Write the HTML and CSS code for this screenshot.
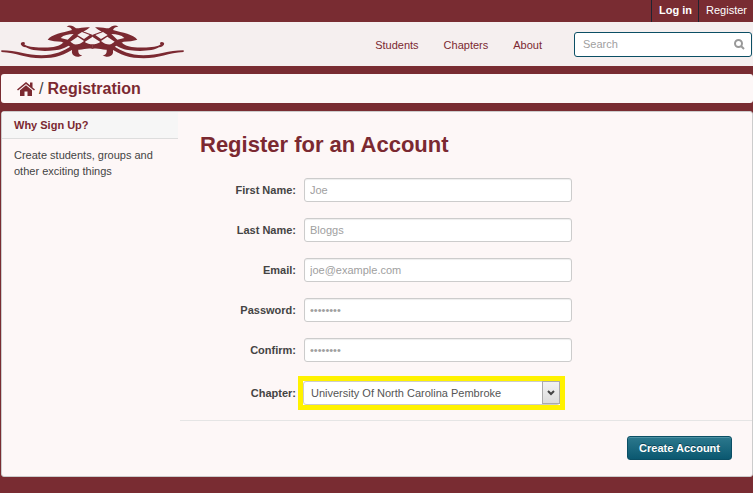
FILE: index.html
```html
<!DOCTYPE html>
<html lang="en">
<head>
<meta charset="utf-8">
<title>Registration</title>
<link rel="stylesheet" href="styles.css">
</head>
<body>
<nav class="topbar" aria-label="Account">
  <a class="login" href="#">Log in</a>
  <a href="#">Register</a>
</nav>
<header class="header">
  <a class="logo" href="#" aria-label="Home">
    <svg viewBox="0 66 555 132" width="185" height="44" aria-hidden="true">
      <defs>
        <g id="wing">
          <path d="M4 151C50 151 80 166 125 166C165 165 192 153 214 138L228 142C195 166 165 175 124 175C78 175 50 158 4 156Z"/>
          <path d="M78 142C60 140 58 126 70 126C77 127 75 131 73 133C82 144 130 144 160 141C178 138 186 132 195 124L214 132C194 145 182 149 164 151C130 155 92 152 78 142Z"/>
          <path fill-rule="evenodd" d="M143 119C155 103 187 98 216 90C213 82 208 80 200 80C208 73 220 77 228 85C240 85 255 80 270 82C264 87 256 92 250 95C260 97 269 101 278 105V147C262 143 250 150 235 149C234 158 237 165 247 166C235 174 220 171 216 159C215 153 218 148 214 144C206 134 194 130 184 125C170 124 154 123 143 119ZM182 114C191 105 205 102 221 102L203 119ZM211 125L233 110L252 123C243 132 232 134 222 133ZM232 105L246 96L269 105L252 117ZM254 126L278 110V133C269 133 261 130 254 126Z"/>
        </g>
      </defs>
      <use href="#wing"/>
      <use href="#wing" transform="matrix(-1 0 0 1 555 0)"/>
    </svg>
  </a>
  <nav class="mainnav" aria-label="Main">
    <a href="#">Students</a>
    <a href="#">Chapters</a>
    <a href="#">About</a>
  </nav>
  <form class="search" role="search">
    <input type="text" placeholder="Search" aria-label="Search">
    <button type="submit" aria-label="Search">
      <svg viewBox="0 0 11 11" width="11" height="11" aria-hidden="true"><circle cx="4.5" cy="4.5" r="3.5"/><path d="M7 7l3 3"/></svg>
    </button>
  </form>
</header>
<div class="breadcrumb">
  <a href="#" aria-label="Home"><svg class="house" viewBox="0 0 18 14" width="18" height="14" aria-hidden="true"><path d="M9 0L0 7.5L1 8.6L9 2L17 8.6L18 7.5L15.5 5.4V.5H13V3.3Z"/><path d="M9 3.2L3 8.2V14H7.5V9.5H10.5V14H15V8.2Z"/></svg></a>
  <span>/</span>
  <h2>Registration</h2>
</div>
<main class="panel">
  <aside class="sidebar">
    <h3>Why Sign Up?</h3>
    <p>Create students, groups and other exciting things</p>
  </aside>
  <form class="register">
    <div class="fields">
      <h1>Register for an Account</h1>
      <div class="row"><label for="first">First Name:</label><input id="first" type="text" placeholder="Joe"></div>
      <div class="row"><label for="last">Last Name:</label><input id="last" type="text" placeholder="Bloggs"></div>
      <div class="row"><label for="email">Email:</label><input id="email" type="email" placeholder="joe@example.com"></div>
      <div class="row"><label for="password">Password:</label><input id="password" type="password" placeholder="••••••••"></div>
      <div class="row"><label for="confirm">Confirm:</label><input id="confirm" type="password" placeholder="••••••••"></div>
      <div class="row chapter">
        <label for="chapter">Chapter:</label>
        <div class="highlight">
          <select id="chapter"><option>University Of North Carolina Pembroke</option></select>
          <span class="arrow" aria-hidden="true"><svg viewBox="0 0 8 6" width="8" height="6"><path d="M1 1l3 3l3-3"/></svg></span>
        </div>
      </div>
    </div>
    <div class="actions"><button type="submit">Create Account</button></div>
  </form>
</main>
</body>
</html>
```
FILE: styles.css
```css
* { box-sizing: border-box; }

body {
  margin: 0;
  background: #792c32;
  color: #444;
  font: 11px/16px "Liberation Sans", Arial, sans-serif;
}

h1, h2, h3, p { margin: 0; }
a { color: #7b2931; text-decoration: none; }
input, select, button { font: inherit; }

.topbar {
  display: flex;
  justify-content: flex-end;
  height: 22px;
}
.topbar a {
  padding: 2px 6px 2px 7px;
  border-left: 1px solid #202430;
  color: #fff;
}
.topbar .login { font-weight: bold; }

.header {
  display: flex;
  align-items: center;
  height: 44px;
  padding-right: 1px;
  background: #f5efef;
}
.logo { display: flex; }
.logo svg { fill: #7b2931; }
.mainnav {
  display: flex;
  gap: 25px;
  margin-left: auto;
  padding-top: 2px;
}
.search {
  display: flex;
  align-items: center;
  width: 178px;
  height: 25px;
  margin-left: 32px;
  padding: 0 6px 0 8px;
  border: 1px solid #0b4f65;
  border-radius: 3px;
  background: #fff;
}
.search input {
  flex: 1;
  min-width: 0;
  padding: 0;
  border: 0;
  background: none;
}
.search button {
  display: flex;
  padding: 0;
  border: 0;
  background: none;
}
.search svg {
  fill: none;
  stroke: #999;
  stroke-width: 2;
}
input::placeholder { color: #a0a0a0; opacity: 1; }

.breadcrumb {
  display: flex;
  align-items: center;
  gap: 4px;
  height: 29px;
  margin: 8px 0 8px 1px;
  padding-left: 16px;
  border-radius: 3px;
  background: #fdf7f7;
  font-size: 16px;
}
.breadcrumb a { display: flex; }
.breadcrumb h2 { color: #7b2931; font-size: 16px; }
.house { fill: #7b2931; }

.panel {
  display: flex;
  min-height: 366px;
  margin-left: 1px;
  border: 1px solid #ccc;
  border-radius: 3px;
  background: #fdf7f7;
}
.sidebar { width: 176px; }
.sidebar h3 {
  padding: 5px 12px;
  border-bottom: 1px solid #ddd;
  background: #f6f6f6;
  color: #7b2931;
  font-size: 11px;
}
.sidebar p { padding: 8px 12px; }

.register { flex: 1; margin-left: 2px; }
.fields { padding: 16px 20px 10px; }
.fields h1 {
  margin-bottom: 11px;
  color: #7b2931;
  font-size: 22px;
  line-height: 34px;
}
.row {
  display: flex;
  align-items: center;
  gap: 8px;
  min-height: 34px;
  margin-bottom: 6px;
}
.row label {
  width: 96px;
  font-weight: bold;
  text-align: right;
}
.row input {
  width: 268px;
  height: 24px;
  padding: 0 5px;
  border: 1px solid #ccc;
  border-radius: 3px;
  background: #fff;
  box-shadow: inset 0 1px 1px #eee;
}
.chapter { gap: 2px; margin: 9px 0 0; }
.highlight {
  position: relative;
  width: 267px;
  border: 5px solid #fff200;
  background: #fff;
}
.highlight select {
  display: block;
  width: 100%;
  height: 24px;
  padding: 0 24px 0 7px;
  border: 1px solid #ccc;
  border-radius: 3px;
  background: #fff;
  color: #555;
  appearance: none;
}
.arrow {
  position: absolute;
  top: 0;
  right: 0;
  display: flex;
  align-items: center;
  justify-content: center;
  width: 18px;
  height: 23px;
  border: 1px solid #aaa;
  background: linear-gradient(#f2f2f2, #dcdcdc);
  pointer-events: none;
}
.arrow svg { fill: none; stroke: #444; stroke-width: 2; }

.actions {
  display: flex;
  justify-content: flex-end;
  padding: 15px 20px 16px;
  border-top: 1px solid #e5e5e5;
}
.actions button {
  height: 24px;
  padding: 0 11px;
  border: 1px solid #0b4f65;
  border-radius: 3px;
  background: linear-gradient(#2c788d, #0b5870);
  box-shadow: inset 0 1px 0 #4d91a3;
  color: #fff;
  font-weight: bold;
  text-shadow: 0 -1px 0 #0b4254;
}
```
